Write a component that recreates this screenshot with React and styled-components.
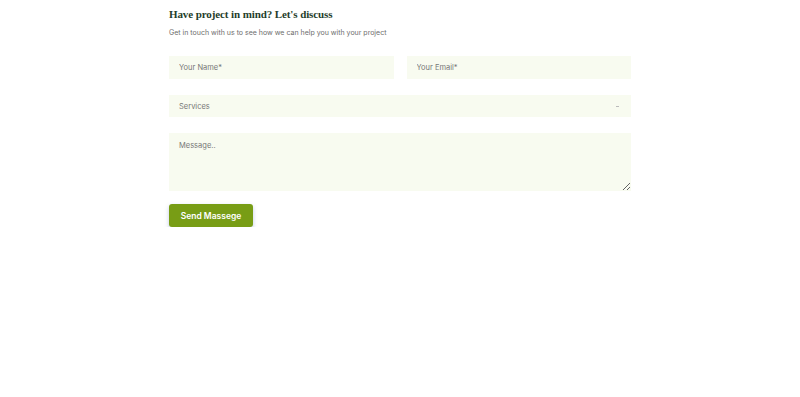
import React from "react";
import styled, { createGlobalStyle } from "styled-components";

const GlobalStyle = createGlobalStyle`
  body {
    margin: 0;
    background: #fff;
    font-family: "Inter", "Noto Sans", sans-serif;
  }
`;

const Section = styled.section`
  width: 462px;
  margin: 0 auto;
  padding-top: 7px;
`;

const Title = styled.h2`
  margin: 0;
  font-family: "Liberation Serif", serif;
  font-weight: 700;
  font-size: 11px;
  letter-spacing: -0.1px;
  color: #1f3d2b;
  line-height: 14px;
`;

const Sub = styled.p`
  margin: 7px 0 0;
  font-size: 7px;
  color: #6d6d6d;
  line-height: 10px;
`;

const Form = styled.form`
  margin-top: 18px;
  display: flex;
  flex-direction: column;
  gap: 16px;
`;

const Row = styled.div`
  display: grid;
  grid-template-columns: 1fr 1fr;
  gap: 13px;
`;

const fieldBase = `
  box-sizing: border-box;
  width: 100%;
  border: none;
  outline: none;
  background: #f8fbf0;
  font-family: "Inter", "Noto Sans", sans-serif;
  font-size: 7.5px;
  color: #6d6d6d;
  padding: 0 10px;
`;

const Input = styled.input`
  ${fieldBase}
  height: 23px;
  &::placeholder { color: #777; }
`;

const Select = styled.div`
  ${fieldBase}
  height: 22px;
  display: flex;
  align-items: center;
  justify-content: space-between;
  color: #777;
`;

const Caret = styled.span`
  width: 3px;
  height: 1px;
  background: #bbb;
  margin-right: 2px;
`;

const TextArea = styled.textarea`
  ${fieldBase}
  height: 58px;
  padding: 8px 10px;
  resize: vertical;
  &::placeholder { color: #777; }
`;

const Button = styled.button`
  align-self: flex-start;
  margin-top: -3px;
  width: 84px;
  height: 23px;
  border: none;
  border-radius: 3px;
  background: #789d15;
  color: #fff;
  font-family: "Inter", "Noto Sans", sans-serif;
  font-weight: 600;
  font-size: 8.5px;
  box-shadow: 0 2px 4px rgba(80, 110, 180, 0.35);
  cursor: pointer;
`;

export default function App() {
  return (
    <>
      <GlobalStyle />
      <Section>
        <Title>Have project in mind? Let's discuss</Title>
        <Sub>Get in touch with us to see how we can help you with your project</Sub>
        <Form onSubmit={(e) => e.preventDefault()}>
          <Row>
            <Input placeholder="Your Name*" />
            <Input placeholder="Your Email*" />
          </Row>
          <Select>
            <span>Services</span>
            <Caret />
          </Select>
          <TextArea placeholder="Message.." />
          <Button type="submit">Send Massege</Button>
        </Form>
      </Section>
    </>
  );
}
